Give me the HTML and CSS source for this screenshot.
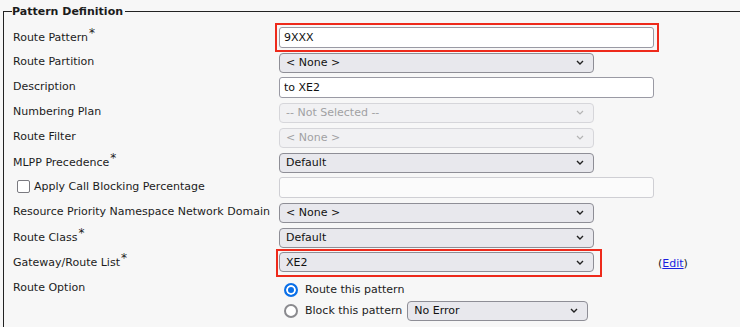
FILE: index.html
```html
<!DOCTYPE html>
<html lang="en">
<head>
  <meta charset="UTF-8" />
  <title>Route Pattern Configuration</title>
  <link rel="stylesheet" href="styles.css">
</head>
<body>
  <fieldset class="group">
    <legend>Pattern Definition</legend>
    <table class="form">
      <colgroup>
        <col class="col-label">
        <col class="col-field">
        <col class="col-extra">
      </colgroup>
      <tr>
        <td class="label">Route Pattern<span class="req">*</span></td>
        <td><span class="mark-box first"><input class="text" type="text" value="9XXX"></span></td>
        <td></td>
      </tr>
      <tr>
        <td class="label">Route Partition</td>
        <td><select class="pick"><option>&lt; None &gt;</option></select></td>
        <td></td>
      </tr>
      <tr>
        <td class="label">Description</td>
        <td><input class="text" type="text" value="to XE2"></td>
        <td></td>
      </tr>
      <tr>
        <td class="label">Numbering Plan</td>
        <td><select class="pick" disabled><option>-- Not Selected --</option></select></td>
        <td></td>
      </tr>
      <tr>
        <td class="label">Route Filter</td>
        <td><select class="pick" disabled><option>&lt; None &gt;</option></select></td>
        <td></td>
      </tr>
      <tr>
        <td class="label">MLPP Precedence<span class="req">*</span></td>
        <td><select class="pick"><option>Default</option></select></td>
        <td></td>
      </tr>
      <tr>
        <td class="label"><label class="check"><input type="checkbox"> Apply Call Blocking Percentage</label></td>
        <td><input class="text" type="text" disabled></td>
        <td></td>
      </tr>
      <tr>
        <td class="label">Resource Priority Namespace Network Domain</td>
        <td><select class="pick"><option>&lt; None &gt;</option></select></td>
        <td></td>
      </tr>
      <tr>
        <td class="label">Route Class<span class="req">*</span></td>
        <td><select class="pick"><option>Default</option></select></td>
        <td></td>
      </tr>
      <tr class="tall">
        <td class="label">Gateway/Route List<span class="req">*</span></td>
        <td class="field"><span class="mark-box"><select class="pick"><option>XE2</option></select></span></td>
        <td class="extra">(<a href="#">Edit</a>)</td>
      </tr>
      <tr class="options">
        <td class="label">Route Option</td>
        <td>
          <div class="option"><input class="radio" type="radio" name="opt" checked> Route this pattern</div>
          <div class="option"><input class="radio" type="radio" name="opt"> Block this pattern
            <select class="pick small"><option>No Error</option></select>
          </div>
        </td>
        <td></td>
      </tr>
    </table>
  </fieldset>
</body>
</html>
```

FILE: styles.css
```css
body {
  margin: 0;
  background-color: #f7f7f7;
  font-family: "DejaVu Sans", Verdana, sans-serif;
  font-size: 11px;
  color: #1c1c1c;
  overflow: hidden;
}

.group {
  margin: 5px 0 0 3px;
  padding: 0 0 40px 9px;
  border: 1px solid #222;
  border-right: none;
  border-bottom: none;
}

.group legend {
  padding: 0 2px 0 0;
  margin-left: -1px;
  font-weight: bold;
  font-size: 11px;
}

.form {
  border-collapse: collapse;
  table-layout: fixed;
  margin-top: 7px;
}

.col-label { width: 266px; }
.col-field { width: 379px; }
.col-extra { width: 60px; }

.form td {
  padding: 0;
  height: 25px;
  vertical-align: middle;
}

.form td.label {
  white-space: nowrap;
  vertical-align: top;
  padding-top: 5px;
  height: 20px;
}

.req {
  position: relative;
  top: -4px;
  margin-left: 1px;
  font-size: 12px;
}

.text {
  box-sizing: border-box;
  width: 375px;
  height: 21px;
  margin: 0;
  padding: 0 4px;
  font: inherit;
  color: #111;
  background: #fff;
  border: 1px solid #9a9aa4;
  border-radius: 3px;
  vertical-align: middle;
}

.text:disabled {
  background: #fbfbfb;
  border-color: #cfcfd4;
}

.pick {
  box-sizing: border-box;
  width: 315px;
  height: 20px;
  margin: 0;
  padding: 0 20px 0 6px;
  font: inherit;
  color: #111;
  background: #e8e8ed url("data:image/svg+xml,%3Csvg xmlns='http://www.w3.org/2000/svg' width='8' height='5' viewBox='0 0 8 5'%3E%3Cpath d='M1 1l3 3 3-3' fill='none' stroke='%23222' stroke-width='1.4'/%3E%3C/svg%3E") no-repeat right 9px center;
  border: 1px solid #8e8e96;
  border-radius: 4px;
  appearance: none;
  -webkit-appearance: none;
  vertical-align: middle;
}

.pick:disabled {
  color: #7c7c80;
  background-color: #efeff2;
  background-image: url("data:image/svg+xml,%3Csvg xmlns='http://www.w3.org/2000/svg' width='8' height='5' viewBox='0 0 8 5'%3E%3Cpath d='M1 1l3 3 3-3' fill='none' stroke='%23999' stroke-width='1.2'/%3E%3C/svg%3E");
  border-color: #c9c9cf;
}

.pick.small {
  width: 181px;
  margin-left: 5px;
}

/* red highlight drawn as an outline so it takes no room */
.mark-box {
  display: inline-flex;
  padding: 0 5px 2px 0;
  outline: 2px solid #ee2a1b;
  outline-offset: 1px;
  vertical-align: middle;
}

.mark-box.first {
  padding: 0 1px 0 0;
  outline-offset: 2px;
}

.tall td {
  height: 27px;
}

.tall td.label {
  height: 22px;
}

.tall td.field {
  vertical-align: top;
  padding-top: 2px;
  height: 25px;
}

.extra {
  padding-bottom: 3px !important;
  color: #222;
}

.extra a {
  color: #1a1ee0;
}

.check {
  display: inline-flex;
  align-items: center;
  gap: 4px;
  margin-left: 4px;
}

.check input {
  appearance: none;
  -webkit-appearance: none;
  width: 13px;
  height: 13px;
  margin: 0;
  background: #fff;
  border: 1px solid #7a7a80;
  border-radius: 2px;
}

.options td {
  vertical-align: top;
}

.options td.label {
  padding-top: 1px;
}

.option {
  display: flex;
  align-items: center;
  height: 21px;
  margin-left: 5px;
}

.option:first-child {
  margin-top: -1px;
}

.radio {
  appearance: none;
  -webkit-appearance: none;
  width: 14px;
  height: 14px;
  margin: 0 7px 0 0;
  background: #fff;
  border: 2px solid #8a8a8e;
  border-radius: 50%;
}

.radio:checked {
  background: #0a6fe8;
  border-color: #0a6fe8;
  box-shadow: inset 0 0 0 2px #fff;
}
```
